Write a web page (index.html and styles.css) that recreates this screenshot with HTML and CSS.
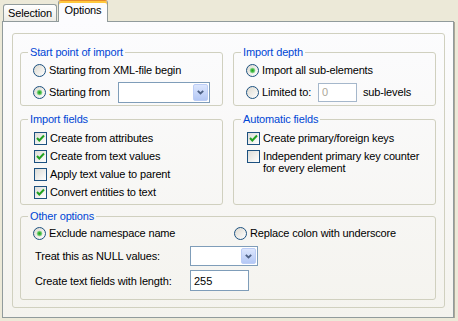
FILE: index.html
```html
<!DOCTYPE html>
<html lang="en">
<head>
  <meta charset="UTF-8">
  <title>Import Options</title>
  <link rel="stylesheet" href="styles.css">
</head>
<body>

  <div class="tabs">
    <div class="tab">Selection</div>
    <div class="tab active">Options</div>
  </div>

  <div class="pane">
    <div class="frame">
      <div class="grid">
        <fieldset class="group g-start">
          <legend>Start point of import</legend>
          <div class="row">
            <span class="radio"></span>Starting from XML-file begin
          </div>
          <div class="row">
            <span class="opt w-start"><span class="radio on"></span>Starting from</span>
            <div class="combo w-combo1"><span class="combo-btn"><svg width="7" height="5" viewBox="0 0 7 5"><polyline points="0.8,0.8 3.5,3.5 6.2,0.8" fill="none" stroke="#4d6185" stroke-width="1.8"/></svg></span></div>
          </div>
        </fieldset>

        <fieldset class="group g-start">
          <legend>Import depth</legend>
          <div class="row">
            <span class="radio on"></span>Import all sub-elements
          </div>
          <div class="row">
            <span class="opt w-limit"><span class="radio"></span>Limited to:</span>
            <input class="field w-levels" type="text" value="0" disabled>
            <span>sub-levels</span>
          </div>
        </fieldset>

        <fieldset class="group g-mid">
          <legend>Import fields</legend>
          <div class="check-row"><span class="box on"><svg width="11" height="11" viewBox="0 0 11 11"><polyline points="2,5 4.3,7.5 9,2.5" fill="none" stroke="#21a121" stroke-width="2"/></svg></span>Create from attributes</div>
          <div class="check-row"><span class="box on"><svg width="11" height="11" viewBox="0 0 11 11"><polyline points="2,5 4.3,7.5 9,2.5" fill="none" stroke="#21a121" stroke-width="2"/></svg></span>Create from text values</div>
          <div class="check-row"><span class="box"></span>Apply text value to parent</div>
          <div class="check-row"><span class="box on"><svg width="11" height="11" viewBox="0 0 11 11"><polyline points="2,5 4.3,7.5 9,2.5" fill="none" stroke="#21a121" stroke-width="2"/></svg></span>Convert entities to text</div>
        </fieldset>

        <fieldset class="group g-mid">
          <legend>Automatic fields</legend>
          <div class="check-row"><span class="box on"><svg width="11" height="11" viewBox="0 0 11 11"><polyline points="2,5 4.3,7.5 9,2.5" fill="none" stroke="#21a121" stroke-width="2"/></svg></span>Create primary/foreign keys</div>
          <div class="check-row"><span class="box"></span><span>Independent primary key counter<br>for every element</span></div>
        </fieldset>
      </div>

      <fieldset class="group g-other">
        <legend>Other options</legend>
        <div class="row r-first">
          <span class="opt w-exclude"><span class="radio on"></span>Exclude namespace name</span>
          <span class="opt"><span class="radio"></span>Replace colon with underscore</span>
        </div>
        <div class="row r-null">
          <span class="lbl">Treat this as NULL values:</span>
          <div class="combo w-combo2"><span class="combo-btn"><svg width="7" height="5" viewBox="0 0 7 5"><polyline points="0.8,0.8 3.5,3.5 6.2,0.8" fill="none" stroke="#4d6185" stroke-width="1.8"/></svg></span></div>
        </div>
        <div class="row r-len">
          <span class="lbl">Create text fields with length:</span>
          <input class="field w-len" type="text" value="255">
        </div>
      </fieldset>
    </div>
  </div>

</body>
</html>
```

FILE: styles.css
```css
body {
  margin: 0;
  background: #ece9d8;
  font-family: "Liberation Sans", Arial, sans-serif;
  font-size: 11px;
  letter-spacing: -0.15px;
  color: #000;
}

.tabs {
  display: flex;
  align-items: flex-end;
  height: 21px;
  padding-left: 3px;
}

.tab {
  box-sizing: border-box;
  width: 54px;
  height: 17px;
  padding-top: 2px;
  line-height: 13px;
  text-align: center;
  border: 1px solid #919b9c;
  border-bottom: none;
  border-radius: 3px 3px 0 0;
  background: linear-gradient(#ffffff, #ecebe5);
}

.tab.active {
  position: relative;
  z-index: 1;
  width: 50px;
  height: 22px;
  margin-left: 1px;
  margin-bottom: -1px;
  padding-top: 3px;
  border-top: 1px solid #e68b2c;
  box-shadow: inset 0 2px 0 #ffc83c;
  background: #fcfcfe;
}

.pane {
  box-sizing: border-box;
  width: 452px;
  height: 297px;
  margin-left: 2px;
  padding: 11px 8px 9px 9px;
  border: 1px solid #919b9c;
  background: linear-gradient(#fcfcfe, #f4f3ee);
  box-shadow: 1px 1px 0 #aca899;
}

.frame {
  box-sizing: border-box;
  height: 275px;
  padding: 12px 8px 7px 7px;
  border: 1px solid #d0d0bf;
  border-radius: 3px;
}

.grid {
  display: grid;
  grid-template-columns: 1fr 1fr;
  gap: 7px 10px;
}

.group {
  margin: 0;
  min-width: 0;
  padding: 0 4px 2px 12px;
  border: 1px solid #d0d0bf;
  border-radius: 3px;
}

.group legend {
  margin-left: -5px;
  padding: 0 2px;
  line-height: 13px;
  color: #0046d5;
}

.g-mid {
  padding-top: 3px;
  padding-bottom: 3px;
}

.g-other {
  margin-top: 5px;
  padding-top: 2px;
  padding-bottom: 7px;
}

.row {
  display: flex;
  align-items: center;
  height: 22px;
  white-space: nowrap;
}

.r-first {
  height: 16px;
}

.r-null {
  margin-top: 4px;
}

.r-len {
  height: 23px;
  margin-top: 2px;
}

.opt {
  display: flex;
  align-items: center;
}

.w-start { width: 85px; }
.w-limit { width: 72px; }
.w-exclude { width: 201px; }

.lbl {
  width: 155px;
  padding-left: 2px;
}

.radio {
  box-sizing: border-box;
  flex: none;
  width: 13px;
  height: 13px;
  margin-right: 3px;
  border: 1px solid #1c5180;
  border-radius: 50%;
  background: linear-gradient(135deg, #dcd9d0, #ffffff);
}

.radio.on {
  background: radial-gradient(circle, #21a121 0, #4cc04c 1.6px, #a6dca6 2.6px, transparent 3.2px),
              linear-gradient(135deg, #dcd9d0, #ffffff);
}

.check-row {
  display: flex;
  align-items: flex-start;
  padding: 3px 0;
  line-height: 12px;
  white-space: nowrap;
}

.box {
  box-sizing: border-box;
  flex: none;
  display: flex;
  align-items: center;
  justify-content: center;
  width: 13px;
  height: 13px;
  margin: 0 3px -1px 1px;
  border: 1px solid #1c5180;
  background: linear-gradient(135deg, #dcdcd7, #ffffff);
}

.combo {
  box-sizing: border-box;
  display: flex;
  justify-content: flex-end;
  padding: 1px;
  border: 1px solid #7f9db9;
  background: #fff;
}

.w-combo1 { width: 92px; height: 21px; }
.w-combo2 { width: 68px; height: 20px; }

.combo-btn {
  box-sizing: border-box;
  display: flex;
  align-items: center;
  justify-content: center;
  width: 15px;
  border: 1px solid #bccdf6;
  border-radius: 2px;
  background: linear-gradient(#dce6fd, #b4c8f5);
}

.field {
  box-sizing: border-box;
  margin: 0;
  padding: 0 3px;
  border: 1px solid #7f9db9;
  background: #fff;
  font: inherit;
  color: #000;
}

.field:disabled {
  color: #aca899;
  border-color: #a5b7cb;
}

.w-levels {
  width: 39px;
  height: 19px;
  margin-right: 6px;
}

.w-len {
  width: 59px;
  height: 21px;
}
```
